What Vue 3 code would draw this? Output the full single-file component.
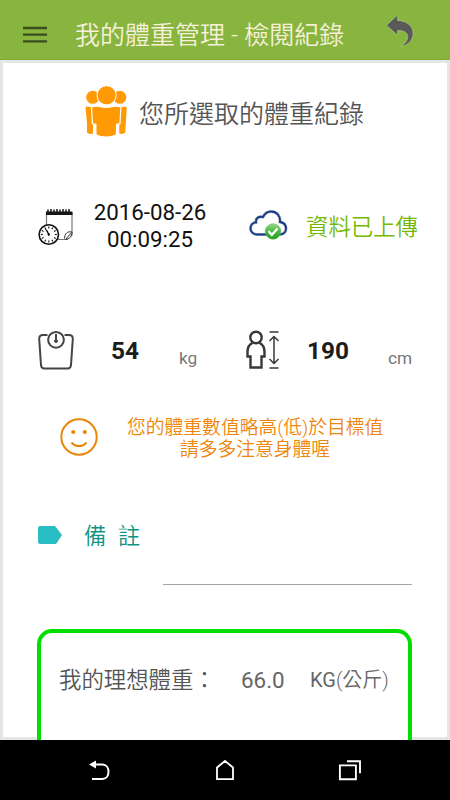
<script setup>
import { ref } from 'vue'

const record = ref({
  date: '2016-08-26',
  time: '00:09:25',
  weight: 54,
  height: 190,
  ideal: '66.0'
})
const ticks = Array.from({ length: 12 }, (_, i) => i * 30)
</script>

<template>
  <div class="screen">
    <header class="bar">
      <svg class="menu" viewBox="0 0 24 18"><path d="M0 2h24M0 8.700h24M0 15.300h24" stroke="#384d1b" stroke-width="2.300" /></svg>
      <h1>我的體重管理 - 檢閱紀錄</h1>
      <svg class="undo" viewBox="0 0 30 36">
        <path d="M.5 11.500 12 1v5.500C22 7 28 12.500 28 20c0 6.500-4.500 12-12.500 13.500 4.500-3 7-6.500 7-10 0-4.500-4-6.500-10.500-6.500v5z" fill="#595957" stroke="#b9cf92" stroke-width=".6" />
      </svg>
    </header>

    <main class="content">
      <section class="heading">
        <svg class="people" viewBox="0 0 42 52" fill="#ff9a05">
          <circle cx="7.700" cy="12.300" r="6.500" /><circle cx="34.800" cy="12.300" r="6.500" />
          <path d="M.5 23q0-1.500 1.500-1.500l6 1v26q-4 1.200-6-1L2 38z" />
          <path d="M41.800 23q0-1.500-1.500-1.500l-6 1v26q4 1.200 6-1l.5-9.500z" />
          <path d="M6.500 21.800q5-1.300 8-.3 6.700 1.700 13.400 0 3-1 8 .3L35 38.500l-3.500 1V49.500q-3 2.500-10.300 2.500t-10.300-2.500V39.500l-3.500-1z" stroke="#fff" stroke-width="1.200" />
          <circle cx="21.600" cy="10.300" r="9.600" stroke="#fff" stroke-width="1" />
        </svg>
        <h2>您所選取的體重紀錄</h2>
      </section>

      <section class="row stamp">
        <svg class="calendar" viewBox="0 0 36 38">
          <path d="M8.500 6v15M34 6v22l-5 4.500H18" fill="none" stroke="#777" stroke-width="1.200" />
          <path d="M8 4.500h26.500V8H8z" fill="#161616" />
          <path d="M10 6V2.500M13 6V2M16 6V2.500M19 6V2M22 6V2.500M25 6V2M28 6V2.500M31 6V2" stroke="#161616" stroke-width="1.500" />
          <path d="M26.500 31.500c0-5 3-7.500 7.500-6.500 0 4.500-2.500 7-6.500 7.500l6-7" fill="#fff" stroke="#333" stroke-width="1" />
          <circle cx="10.800" cy="27.500" r="9.700" fill="#fff" stroke="#111" stroke-width="1.600" />
          <path v-for="angle in ticks" :key="angle" d="M10.800 19.500v2" :transform="`rotate(${angle} 10.8 27.5)`" stroke="#222" stroke-width="1.200" />
          <path d="M10.800 27.500 7.500 22M10.800 27.500 9 23.500" stroke="#111" stroke-width="1.100" />
          <circle cx="10.800" cy="27.500" r="1.200" />
        </svg>
        <p class="datetime">{{ record.date }}<br />{{ record.time }}</p>
        <svg class="cloud" viewBox="0 0 38 30">
          <defs>
            <linearGradient id="ok" x2="0" y2="1"><stop stop-color="#9bdc85" /><stop offset=".5" stop-color="#42b83b" /><stop offset="1" stop-color="#20a51f" /></linearGradient>
          </defs>
          <path d="M8.500 24.500C4 24.500 1.500 21.500 1.500 18.500c0-3.500 2.500-6 5.500-6.200C6.500 8.500 9.500 6 14 7c2-4 4.500-5.500 8-5.500 6 0 9.500 4.500 9 10.500 3.500.5 6 3 6 6.500s-2.500 6-6.500 6z" fill="#fff" stroke="#b1b7c7" stroke-width="3.200" />
          <path d="M8.500 24.500C4 24.500 1.500 21.500 1.500 18.500c0-3.500 2.500-6 5.500-6.200C6.500 8.500 9.500 6 14 7c2-4 4.500-5.500 8-5.500 6 0 9.500 4.500 9 10.500 3.500.5 6 3 6 6.500s-2.500 6-6.500 6z" fill="none" stroke="#173a87" stroke-width="1.900" />
          <circle cx="24" cy="21.500" r="7.800" fill="url(#ok)" stroke="#5fae60" stroke-width=".5" />
          <path d="m19.500 21 3.300 4 5.700-6.500" fill="none" stroke="#fff" stroke-width="2.400" />
        </svg>
        <p class="uploaded">資料已上傳</p>
      </section>

      <section class="row measures">
        <svg class="scale" viewBox="0 0 36 40" fill="none" stroke="#454545" stroke-width="2">
          <path d="M9.500 5H5Q1 5 1.200 9L3 35q.2 3.500 3.500 3.500h23q3.300 0 3.500-3.500l1.800-26Q35 5 31 5h-4.500" />
          <circle cx="18" cy="9.800" r="7.900" />
          <path d="M18 4v5" /><circle cx="18" cy="11" r="1.500" fill="#454545" stroke-width="1" />
        </svg>
        <strong>{{ record.weight }}</strong>
        <span class="unit">kg</span>
        <svg class="person" viewBox="0 0 34 40" fill="none" stroke="#383838">
          <circle cx="10" cy="7.500" r="5.700" stroke-width="2.400" />
          <path d="M6.500 12.800C3 14.500 1.500 18 1.500 22v4.500h3v11h11v-11h3V22c0-4-1.500-7.500-5-9.200" stroke-width="2.400" />
          <path d="M23.500 2h9M23.500 38h9M28 7v26M23.500 11 28 6.500l4.500 4.500M23.500 29l4.500 4.500 4.500-4.500" stroke-width="1.500" />
        </svg>
        <strong>{{ record.height }}</strong>
        <span class="unit cm">cm</span>
      </section>

      <section class="row advice">
        <svg class="smile" viewBox="0 0 38 38" fill="none" stroke="#e88708" stroke-width="2">
          <circle cx="19" cy="19" r="17.700" />
          <path d="M11.500 24.500c4 4.700 11 4.700 15 0" />
          <circle cx="13.200" cy="14" r="2.100" fill="#e88708" stroke="none" /><circle cx="24.800" cy="14" r="2.100" fill="#e88708" stroke="none" />
        </svg>
        <p>您的體重數值略高(低)於目標值<br />請多多注意身體喔</p>
      </section>

      <section class="row note">
        <svg class="tag" viewBox="0 0 24 18"><path d="M2 .5h15L23.500 9 18 17.500H2Q.5 17.500.5 16V2Q.5.5 2 .5z" fill="#29bdc5" stroke="#17b5b9" stroke-width=".8" /></svg>
        <label>備&ensp;註</label>
      </section>
      <div class="underline"></div>

      <section class="ideal">
        <span class="name">我的理想體重：</span>
        <span class="amount">{{ record.ideal }}</span>
        <span class="kilo">KG<span class="han">(公斤)</span></span>
      </section>
    </main>

    <nav class="system">
      <svg viewBox="0 0 24 24" fill="none" stroke="#fff" stroke-width="2">
        <path d="M5 6.500h9.500c8 0 8 14.500 0 14.500H4" /><path d="M1 6.500 8 2.500v8z" fill="#fff" stroke="none" />
      </svg>
      <svg viewBox="0 0 24 24" fill="none" stroke="#fff" stroke-width="1.800"><path d="M4 21.200V9.500L12 3l8 6.500v11.700z" /></svg>
      <svg viewBox="0 0 24 24" fill="none" stroke="#fff" stroke-width="1.900"><path d="M1.900 7.400h16v13.800h-16zM9 3.200h13v12" /></svg>
    </nav>
  </div>
</template>

<style>
body { margin: 0; background: #fff; }
</style>

<style scoped>
.screen {
  width: 450px;
  height: 800px;
  overflow: hidden;
  display: flex;
  flex-direction: column;
  background: #fff;
  color: #555;
  font-family: Roboto, "Noto Sans CJK TC", sans-serif;
  font-weight: 350;
}
svg { display: block; overflow: visible; }
h1, h2, p { margin: 0; font-weight: 350; white-space: nowrap; }
.bar {
  height: 60px;
  box-sizing: border-box;
  padding: 10px 35px 0 23px;
  border-bottom: 1px solid #7cae2e;
  background: #88b540;
  display: grid;
  grid-template-columns: 52px 311px 29px;
  align-items: center;
}
.menu { width: 24px; height: 18px; }
.bar h1 { padding-top: 2px; font-size: 25px; line-height: 36px; color: #f7f0d8; }
.undo { width: 29px; height: 35px; margin-top: -6px; }
.content {
  height: 680px;
  box-sizing: border-box;
  border: 3px solid #e5e5e5;
}
.heading {
  height: 100px;
  display: flex;
  align-items: center;
  gap: 12px;
  padding-left: 82px;
}
.people { width: 42px; height: 52px; margin-top: -4px; }
.heading h2 { padding-top: 3px; font-size: 25px; line-height: 36px; }
.row { display: grid; align-items: center; padding-left: 35px; }
.stamp { height: 126px; grid-template-columns: 38px 148px 82px auto; }
.calendar { width: 36px; height: 38px; }
.datetime {
  text-align: center;
  font-size: 22.3px;
  line-height: 27px;
  font-weight: 400;
  color: #111;
}
.cloud { width: 38px; height: 30px; margin: -3px 0 0 25px; }
.uploaded { padding-top: 1px; font-size: 22.4px; line-height: 32px; color: #72b900; }
.measures { height: 122px; grid-template-columns: 73px 68px 67px 61px 81px auto; }
.scale { width: 36px; height: 40px; }
.person { width: 34px; height: 40px; }
.measures strong { padding-top: 2px; font-size: 24.4px; line-height: 30px; font-weight: 700; color: #1d1d1d; }
.unit { font-size: 17.3px; line-height: 20px; padding-top: 15px; font-weight: 400; color: #777; }
.advice { height: 52px; padding-left: 57px; grid-template-columns: 67px auto; }
.advice p { padding-top: 3px; width: 256px; text-align: center; font-size: 18.8px; line-height: 22px; color: #ef860c; }
.smile { width: 38px; height: 38px; }
.note { height: 48px; margin-top: 48px; grid-template-columns: 46px auto; }
.tag { width: 24px; height: 18px; }
.note label { padding-top: 2px; font-size: 22.4px; line-height: 32px; color: #109582; }
.underline { height: 25px; margin: 0 35px 0 160px; border-bottom: 1px solid #a5a5a5; }
.ideal {
  height: 111px;
  box-sizing: border-box;
  margin: 44px 35px 0 34px;
  padding: 31px 0 0 18px;
  border: 4px solid #00df00;
  border-bottom: 0;
  border-radius: 15px 15px 0 0;
  background: #fff;
  position: relative;
  display: grid;
  grid-template-columns: 182px 69px auto;
  align-items: center;
  align-content: start;
  line-height: 32px;
  white-space: nowrap;
}
.name, .amount { font-size: 22.4px; }
.amount, .kilo { font-weight: 400; color: #666; }
.kilo { font-size: 20px; }
.han { font-weight: 350; }
.system {
  height: 60px;
  background: #000;
  display: grid;
  grid-template-columns: 24px 24px 24px;
  justify-content: center;
  align-items: center;
  column-gap: 101px;
}
.system svg { width: 24px; height: 24px; }
</style>
